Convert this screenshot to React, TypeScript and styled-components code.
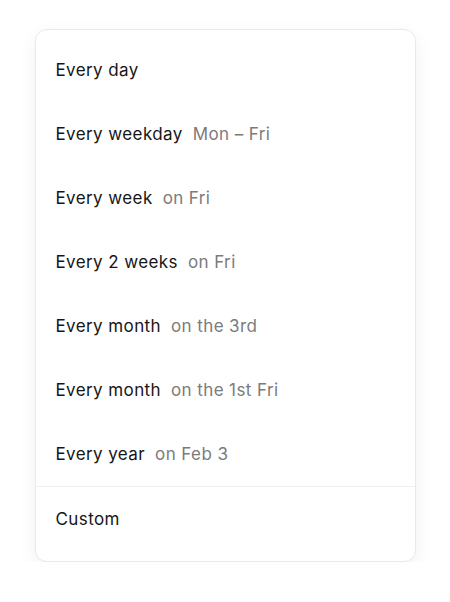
import styled, { createGlobalStyle } from "styled-components";

const GlobalStyle = createGlobalStyle`
  body {
    margin: 0;
    background: #ffffff;
    font-family: "Inter", "Liberation Sans", sans-serif;
  }
`;

const Page = styled.div`
  display: flex;
  justify-content: center;
  padding-top: 29px;
`;

const Menu = styled.ul`
  list-style: none;
  margin: 0;
  padding: 8px 0 10px;
  width: 381px;
  box-sizing: border-box;
  background: #ffffff;
  border: 1px solid #e9e9ec;
  border-radius: 12px;
  box-shadow: 0 6px 20px rgba(0, 0, 0, 0.06);
`;

const Item = styled.li<{ $divider?: boolean }>`
  display: flex;
  align-items: center;
  gap: 10px;
  height: 64px;
  padding: 0 20px;
  font-size: 17px;
  letter-spacing: 0.4px;
  color: #161616;
  border-top: ${({ $divider }) => ($divider ? "1px solid #efeff5" : "none")};
  cursor: pointer;
`;

const Hint = styled.span`
  color: #7b7b7b;
`;

const options = [
  { label: "Every day" },
  { label: "Every weekday", hint: "Mon – Fri" },
  { label: "Every week", hint: "on Fri" },
  { label: "Every 2 weeks", hint: "on Fri" },
  { label: "Every month", hint: "on the 3rd" },
  { label: "Every month", hint: "on the 1st Fri" },
  { label: "Every year", hint: "on Feb 3" },
];

export default function App() {
  return (
    <Page>
      <GlobalStyle />
      <Menu>
        {options.map((o, i) => (
          <Item key={i}>
            <span>{o.label}</span>
            {o.hint && <Hint>{o.hint}</Hint>}
          </Item>
        ))}
        <Item $divider>
          <span>Custom</span>
        </Item>
      </Menu>
    </Page>
  );
}
